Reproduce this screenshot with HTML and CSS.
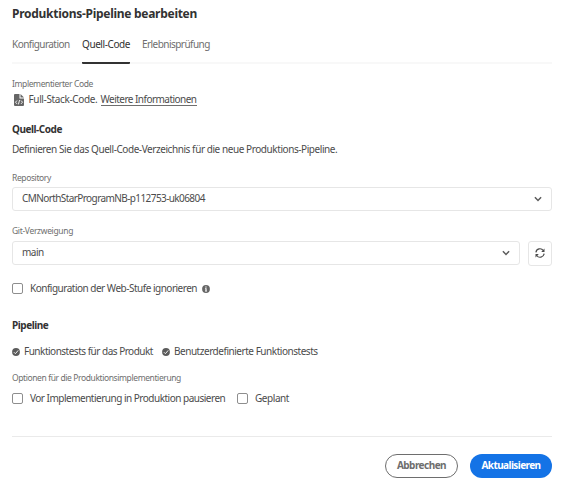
FILE: index.html
```
<!DOCTYPE html>
<html lang="de">
<head>
<meta charset="utf-8">
<title>Produktions-Pipeline bearbeiten</title>
<link rel="stylesheet" href="styles.css">
</head>
<body>
<main class="dialog">
  <h1 class="title">Produktions-Pipeline bearbeiten</h1>
  <nav class="tabs">
    <a class="tab">Konfiguration</a>
    <a class="tab selected">Quell-Code</a>
    <a class="tab">Erlebnisprüfung</a>
  </nav>
  <div class="label code-label">Implementierter Code</div>
  <div class="row code-row">
    <svg class="file-icon" viewBox="0 0 10 12"><path d="M1 0h4.500v4.500H10V11a1 1 0 0 1-1 1H1a1 1 0 0 1-1-1V1a1 1 0 0 1 1-1z" fill="#666"/><path d="M6.500 0L10 3.500H6.500z" fill="#666"/><path d="M3 6.500L1.500 8.200 3 9.900M7 6.500l1.500 1.700L7 9.900M5.600 6L4.400 10.400" fill="none" stroke="#fff" stroke-width=".9"/></svg>
    <span class="stack">Full-Stack-Code.</span>
    <a class="link">Weitere Informationen</a>
  </div>
  <h2 class="heading source-heading">Quell-Code</h2>
  <p class="description">Definieren Sie das Quell-Code-Verzeichnis für die neue Produktions-Pipeline.</p>
  <div class="label repo-label">Repository</div>
  <div class="picker repo"><span>CMNorthStarProgramNB-p112753-uk06804</span><svg class="chevron" viewBox="0 0 8 6"><path d="M.9 1.200L4 4.400l3.100-3.200"/></svg></div>
  <div class="label git-label">Git-Verzweigung</div>
  <div class="branch-row">
    <div class="picker branch"><span>main</span><svg class="chevron" viewBox="0 0 8 6"><path d="M.9 1.200L4 4.400l3.100-3.200"/></svg></div>
    <button class="refresh" aria-label="Aktualisieren"><svg viewBox="0 0 10 10"><path d="M.9 4.300A4.100 4.100 0 0 1 8.300 2.500M9.100 5.700A4.100 4.100 0 0 1 1.700 7.500" fill="none" stroke="#4b4b4b" stroke-width="1.200"/><path d="M9.500.6v3.300H6.200zM.5 9.400V6.100h3.300z" fill="#4b4b4b"/></svg></button>
  </div>
  <div class="row ignore-row">
    <span class="checkbox"></span><span class="option">Konfiguration der Web-Stufe ignorieren</span>
    <svg class="info" viewBox="0 0 8 8"><circle cx="4" cy="4" r="3.900" fill="#666"/><path d="M3.300 1.400h1.300v1.200H3.300zM3 3.300h1.600v2.400H5v.8H3v-.8h.4V4.100H3z" fill="#fff"/></svg>
  </div>
  <h2 class="heading pipeline-heading">Pipeline</h2>
  <div class="row tests">
    <svg class="check" viewBox="0 0 8 8"><circle cx="4" cy="4" r="3.900" fill="#5c5c5c"/><path d="M1.900 4.200l1.500 1.500L6.200 2.400" fill="none" stroke="#fff" stroke-width=".9"/></svg><span class="product">Funktionstests für das Produkt</span>
    <svg class="check" viewBox="0 0 8 8"><circle cx="4" cy="4" r="3.900" fill="#5c5c5c"/><path d="M1.900 4.200l1.500 1.500L6.200 2.400" fill="none" stroke="#fff" stroke-width=".9"/></svg><span class="custom">Benutzerdefinierte Funktionstests</span>
  </div>
  <div class="label options-label">Optionen für die Produktionsimplementierung</div>
  <div class="row options">
    <span class="checkbox"></span><span class="option pause">Vor Implementierung in Produktion pausieren</span>
    <span class="checkbox"></span><span class="option planned">Geplant</span>
  </div>
  <footer class="actions">
    <button class="button cancel">Abbrechen</button>
    <button class="button primary">Aktualisieren</button>
  </footer>
</main>
</body>
</html>
```
FILE: styles.css
```
* { box-sizing: border-box; }
body { margin: 0; background: #fff; color: #4b4b4b; font: 10px/16px "Noto Sans", sans-serif; letter-spacing: -.5px; white-space: nowrap; }
.dialog { width: 540px; margin: 0 0 0 12px; padding-top: 6px; }
h1, h2, p { margin: 0; }
svg { display: block; flex: none; }
.title { font-size: 12px; line-height: 16px; font-weight: 700; letter-spacing: -.28px; color: #323232; }
.tabs { display: flex; gap: 12px; height: 42px; padding-top: 14px; border-bottom: 2px solid #f8f8f8; }
.tab { height: 28px; color: #6e6e6e; width: 58px; letter-spacing: -.55px; }
.tab.selected { width: 48px; color: #323232; letter-spacing: -.42px; border-bottom: 2px solid #323232; border-radius: 1px; }
.label { font-size: 8.5px; line-height: 12px; letter-spacing: -.39px; color: #6e6e6e; }
.row { display: flex; align-items: center; height: 16px; }
.code-label { margin-top: 14px; }
.code-row { margin-top: 1px; }
.file-icon { width: 10px; height: 12px; margin: 2px 5px 0 2px; }
.stack { width: 69px; margin-left: -.5px; letter-spacing: -.36px; }
.link { width: 96px; height: 13px; line-height: 12px; margin-left: 3px; border-bottom: 1px solid #6e6e6e; letter-spacing: -.53px; }
.heading { font-size: 10px; line-height: 16px; color: #323232; letter-spacing: -.46px; }
.source-heading { margin-top: 14px; }
.description { margin-top: 4px; letter-spacing: -.43px; }
.repo-label { margin-top: 15px; }
.picker { display: flex; align-items: center; justify-content: space-between; height: 24px; border: 1px solid #e6e6e6; border-radius: 3px; padding: 0 9px; }
.picker span { margin-top: -2px; }
.repo { margin-top: 3px; letter-spacing: -.59px; }
.chevron { width: 8px; height: 6px; fill: none; stroke: #5c5c5c; stroke-width: 1.5px; }
.git-label { margin-top: 14px; letter-spacing: -.33px; }
.branch-row { display: flex; gap: 8px; margin-top: 4px; }
.branch { flex: 1; height: 24px; }
.refresh { display: flex; align-items: center; justify-content: center; width: 24px; height: 25px; padding: 0 0 1px; background: #fff; border: 1px solid #e6e6e6; border-radius: 3px; }
.refresh svg { width: 10px; height: 10px; }
.ignore-row { margin-top: 15px; }
.checkbox { flex: none; width: 11px; height: 11px; margin-top: -1px; border: 1px solid #8e8e8e; border-radius: 2px; }
.option { margin: -2px 0 0 7px; }
.info { width: 8px; height: 8px; margin-left: 5px; }
.pipeline-heading { margin-top: 20px; }
.tests { margin-top: 10px; }
.check { width: 8px; height: 8px; margin: 2px 4px 0 0; }
.product { width: 138px; }
.custom { letter-spacing: -.47px; }
.options-label { margin-top: 13px; letter-spacing: -.4px; }
.options { margin-top: 7px; }
.pause { width: 207px; }
.planned { letter-spacing: -.43px; }
.actions { display: flex; justify-content: flex-end; gap: 12px; margin-top: 29px; padding-top: 17px; border-top: 1px solid #eaeaea; }
.button { height: 24px; padding: 0 0 2px; border-radius: 12px; font: 700 10px/14px "Noto Sans", sans-serif; }
.cancel { width: 73px; border: 1px solid #6e6e6e; background: #fff; color: #6e6e6e; letter-spacing: -.54px; }
.primary { width: 82px; border: 0; background: #1473e6; color: #fff; letter-spacing: -.58px; }
```
